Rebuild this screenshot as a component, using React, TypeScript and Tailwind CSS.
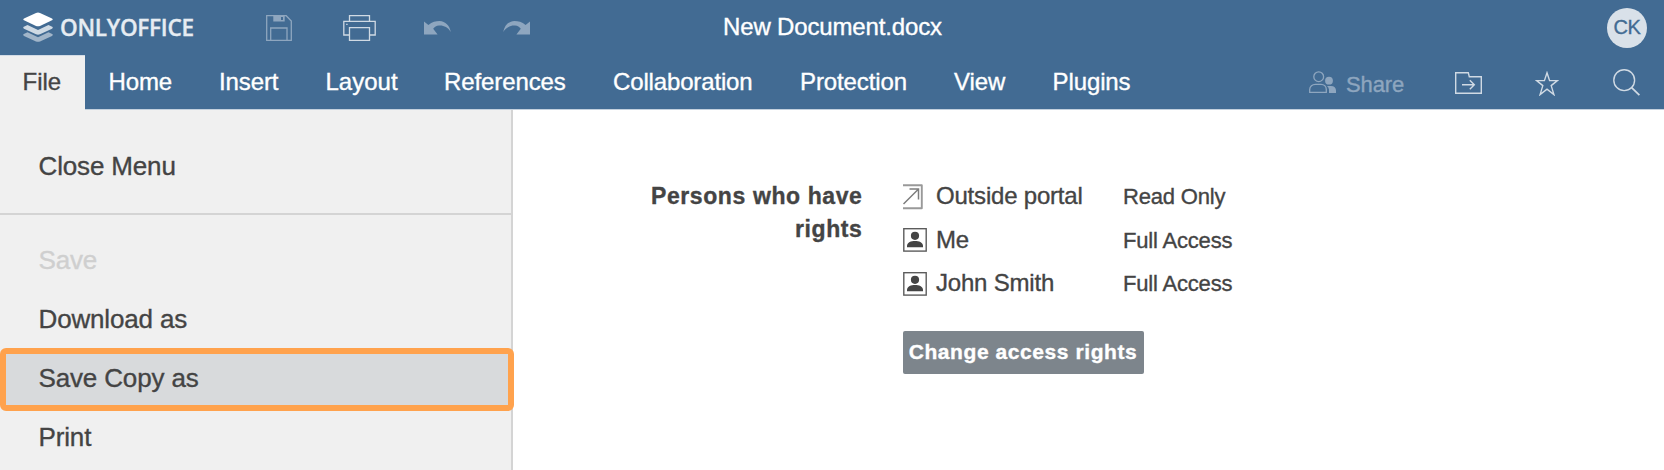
import React from "react";

function Logo() {
  return (
    <svg width="30" height="31" viewBox="0 0 30 31" className="shrink-0">
      <path d="M0.3 22.2 L4.5 20.3 L15 25.2 L25.5 20.3 L29.7 22.2 Q30 23.4 29 23.9 L17 29.4 Q15 30.2 13 29.4 L1 23.9 Q0 23.4 0.3 22.2Z" fill="#fff" opacity="0.5" />
      <path d="M0.3 15 L4.5 13.1 L15 18 L25.5 13.1 L29.7 15 Q30 16.2 29 16.7 L17 22.3 Q15 23.1 13 22.3 L1 16.7 Q0 16.2 0.3 15Z" fill="#fff" opacity="0.75" />
      <path d="M13 1 Q15 0.2 17 1 L29 6.5 Q30.4 7.4 29 8.3 L17 13.9 Q15 14.8 13 13.9 L1 8.3 Q-0.4 7.4 1 6.5Z" fill="#fff" />
    </svg>
  );
}

function SaveIcon() {
  return (
    <svg width="26" height="26" viewBox="0 0 26 26" fill="none" stroke="#8ea6bf" className="shrink-0">
      <path d="M0.7 0.7 H20.2 L25.3 6 V25.3 H0.7Z" strokeWidth="1.3" />
      <path d="M4.7 25 V13 H21 V25" strokeWidth="1.3" />
      <path d="M7.3 1 V6.6 H18.7 V1Z M15 2 V5 H17 V2Z" fill="#8ea6bf" fillRule="evenodd" stroke="none" />
    </svg>
  );
}

function PrintIcon() {
  return (
    <svg width="33" height="26" viewBox="0 0 33 26" fill="none" stroke="#d0dae4" strokeWidth="1.3" className="shrink-0">
      <path d="M6.5 6 V0.7 H26.5 V6" />
      <path d="M6 20 H0.8 V6.3 H32.2 V20 H27" />
      <path d="M6.5 12.7 H26.5 V25.3 H6.5Z" />
      <path d="M3.2 9.3 H4.6" />
    </svg>
  );
}

function UndoIcon({ flip = false }: { flip?: boolean }) {
  return (
    <svg width="27" height="14" viewBox="0 0 27 14" className={flip ? "shrink-0 -scale-x-100" : "shrink-0"}>
      <path d="M0 0.6 L4.4 4 C8 0.7 12 0 15.5 0 C21.5 0.2 25.6 4.6 26.8 11 C24 6.3 19.5 4.2 15 4.6 C12.3 4.9 10.6 6 9.2 7.7 L13.6 13.4 H0Z" fill="#8ea6bf" />
    </svg>
  );
}

function ShareIcon() {
  return (
    <svg width="28" height="23" viewBox="0 0 28 23" className="shrink-0">
      <circle cx="9.7" cy="5.7" r="4.9" fill="none" stroke="#8ea6bf" strokeWidth="1.3" />
      <path d="M0.7 21.3 V18.5 C0.7 15.3 3.4 13.3 6.3 13.3 H12 C15 13.3 17.3 15.3 17.3 18.5 V21.3Z" fill="none" stroke="#8ea6bf" strokeWidth="1.3" />
      <circle cx="20" cy="9.7" r="3.9" fill="#8ea6bf" />
      <path d="M18 15 H22 C25.2 15 27 17 27 19.5 V22 H20 V18.5 Q19.6 16.4 18 15Z" fill="#8ea6bf" />
    </svg>
  );
}

function FolderIcon() {
  return (
    <svg width="27" height="22" viewBox="0 0 27 22" fill="none" stroke="#d0dae4" strokeWidth="1.4" className="shrink-0">
      <path d="M0.7 0.7 H13.3 L14.3 4.7 H26.3 V21.3 H0.7Z" />
      <path d="M7 12.7 H19.2 M14.8 8.2 L19.3 12.7 L14.8 17.2" />
    </svg>
  );
}

function StarIcon() {
  return (
    <svg width="24" height="25" viewBox="0 0 24 25" fill="none" stroke="#d0dae4" strokeWidth="1.4" className="shrink-0">
      <path d="M12 1.8 L14.6 9.6 H22.4 L16.2 14.6 L18.9 23.6 L12 18.2 L5.1 23.6 L7.8 14.6 L1.6 9.6 H9.4Z" />
    </svg>
  );
}

function SearchIcon() {
  return (
    <svg width="27" height="27" viewBox="0 0 27 27" fill="none" stroke="#d0dae4" strokeWidth="1.4" className="shrink-0">
      <circle cx="11.2" cy="11.2" r="10.4" />
      <path d="M18.4 18.4 L26.4 26.2" strokeWidth="1.8" />
    </svg>
  );
}

function OutsideIcon() {
  return (
    <svg width="24" height="26" viewBox="0 0 24 26" fill="none" className="shrink-0">
      <path d="M0 1.3 H18.8 V24.3 H0" stroke="#999" strokeWidth="1.9" strokeLinejoin="round" />
      <path d="M0.5 20 L15.3 5.2 M6.5 5 H15.5 V15.5" stroke="#7d7d7d" strokeWidth="1.5" />
    </svg>
  );
}

function PersonIcon() {
  return (
    <svg width="24" height="24" viewBox="0 0 24 24" className="shrink-0">
      <rect x="0.8" y="0.7" width="22.4" height="22.4" fill="none" stroke="#5c5c5c" strokeWidth="1.4" />
      <circle cx="12" cy="7.8" r="4.1" fill="#444" />
      <path d="M4 19.2 V17.5 C4.4 14.3 8 13 12 13 S19.6 14.3 20 17.5 V19.2Z" fill="#444" />
    </svg>
  );
}

const tabs = [
  { label: "Home", cls: "w-[110.5px] tracking-[-0.15px]" },
  { label: "Insert", cls: "w-[106.5px] tracking-[-0.1px]" },
  { label: "Layout", cls: "w-[118.5px]" },
  { label: "References", cls: "w-[169px] tracking-[-0.1px]" },
  { label: "Collaboration", cls: "w-[187px] tracking-[-0.15px]" },
  { label: "Protection", cls: "w-[154px] tracking-[-0.12px]" },
  { label: "View", cls: "w-[98.5px] tracking-[-0.1px]" },
  { label: "Plugins", cls: "w-[125px] tracking-[-0.1px]" },
];

const people = [
  { icon: <OutsideIcon />, name: "Outside portal", access: "Read Only" },
  { icon: <PersonIcon />, name: "Me", access: "Full Access" },
  { icon: <PersonIcon />, name: "John Smith", access: "Full Access" },
];

export default function App() {
  return (
    <div className="flex h-[470px] w-[1664px] flex-col overflow-hidden bg-white font-['Liberation_Sans',Arial,sans-serif] text-[#444] [-webkit-text-stroke:0.35px]">
      <header className="h-[110px] shrink-0 bg-[#426b93] text-white">
        <div className="flex h-[55px] items-center">
          <div className="flex w-[266px] items-center pl-[23px]">
            <Logo />
            <span className="ml-[7px] pt-[1px] font-['Open_Sans',sans-serif] text-[22.5px] leading-none font-semibold tracking-[-0.25px] text-[#e6ecf2]">
              ONLYOFFICE
            </span>
          </div>
          <div className="flex w-[457px] items-center">
            <SaveIcon />
            <div className="ml-[51px] flex">
              <PrintIcon />
            </div>
            <div className="ml-[48px] flex">
              <UndoIcon />
            </div>
            <div className="ml-[52px] flex">
              <UndoIcon flip />
            </div>
          </div>
          <div className="pb-[2px] text-[24px] leading-[53px] tracking-[-0.15px] whitespace-nowrap">New Document.docx</div>
          <div className="mr-[17px] ml-auto flex size-10 items-center justify-center rounded-full bg-[#d9e1e9] pb-[2px] text-[20px] tracking-[-0.5px] text-[#426b93]">
            CK
          </div>
        </div>
        <div className="flex h-[55px]">
          <div className="w-[85px] border-t border-[#d3dce6] bg-[#f0f0f0] pl-[22.5px] text-[24px] leading-[51px] text-[#444]">File</div>
          <div className="flex grow border-b border-[#c3d0dd]">
            <nav className="flex pl-[23.5px] text-[24px] leading-[53px]">
              {tabs.map((t) => (
                <div key={t.label} className={t.cls}>
                  {t.label}
                </div>
              ))}
            </nav>
            <div className="ml-auto flex items-center pr-[24px]">
              <div className="pt-[1px]">
                <ShareIcon />
              </div>
              <span className="w-[118px] pt-[5px] pl-[9px] text-[22px] leading-none tracking-[-0.1px] text-[#8ea6bf]">Share</span>
              <div className="w-[80px] pt-[1px]">
                <FolderIcon />
              </div>
              <div className="w-[78px] pt-[3px]">
                <StarIcon />
              </div>
              <SearchIcon />
            </div>
          </div>
        </div>
      </header>

      <div className="flex min-h-0 grow">
        <aside className="flex w-[513px] shrink-0 flex-col border-r-2 border-[#d4d4d4] bg-[#f0f0f0] text-[26px] tracking-[-0.15px]">
          <div className="h-[105px] shrink-0 border-b-2 border-[#d4d4d4] pl-[38.5px] leading-[112px]">Close Menu</div>
          <div className="h-[74px] shrink-0 pt-[15px] pl-[38.5px] leading-[60px] text-[#cfcfcf]">Save</div>
          <div className="h-[59px] shrink-0 pl-[38.5px] leading-[61px]">Download as</div>
          <div className="relative z-10 h-[63px] w-[514px] shrink-0 rounded-[6px] border-6 border-[#ffa24d] bg-[#d8dadc] pl-[32.5px] leading-[49px]">
            Save Copy as
          </div>
          <div className="h-[59px] shrink-0 pl-[38.5px] leading-[52px]">Print</div>
        </aside>

        <main className="flex grow pt-[70px]">
          <div className="w-[349.5px] text-right text-[23px] leading-[33px] font-bold tracking-[0.6px]">
            Persons who have
            <br />
            rights
          </div>
          <div className="ml-[40px]">
            {people.map((p) => (
              <div key={p.name} className="flex h-[43.5px] items-start">
                <div className="flex h-[33px] w-[33.5px] items-center">{p.icon}</div>
                <div className="w-[187px] text-[24px] leading-[32px] tracking-[-0.2px]">{p.name}</div>
                <div className="text-[22px] leading-[33px] tracking-[-0.18px]">{p.access}</div>
              </div>
            ))}
            <button className="mt-[20px] block h-[43px] w-[241px] rounded-[2px] bg-[#7d858c] pb-[2px] text-center text-[21px] leading-[41px] font-bold tracking-[0.58px] whitespace-nowrap text-white">
              Change access rights
            </button>
          </div>
        </main>
      </div>
    </div>
  );
}
